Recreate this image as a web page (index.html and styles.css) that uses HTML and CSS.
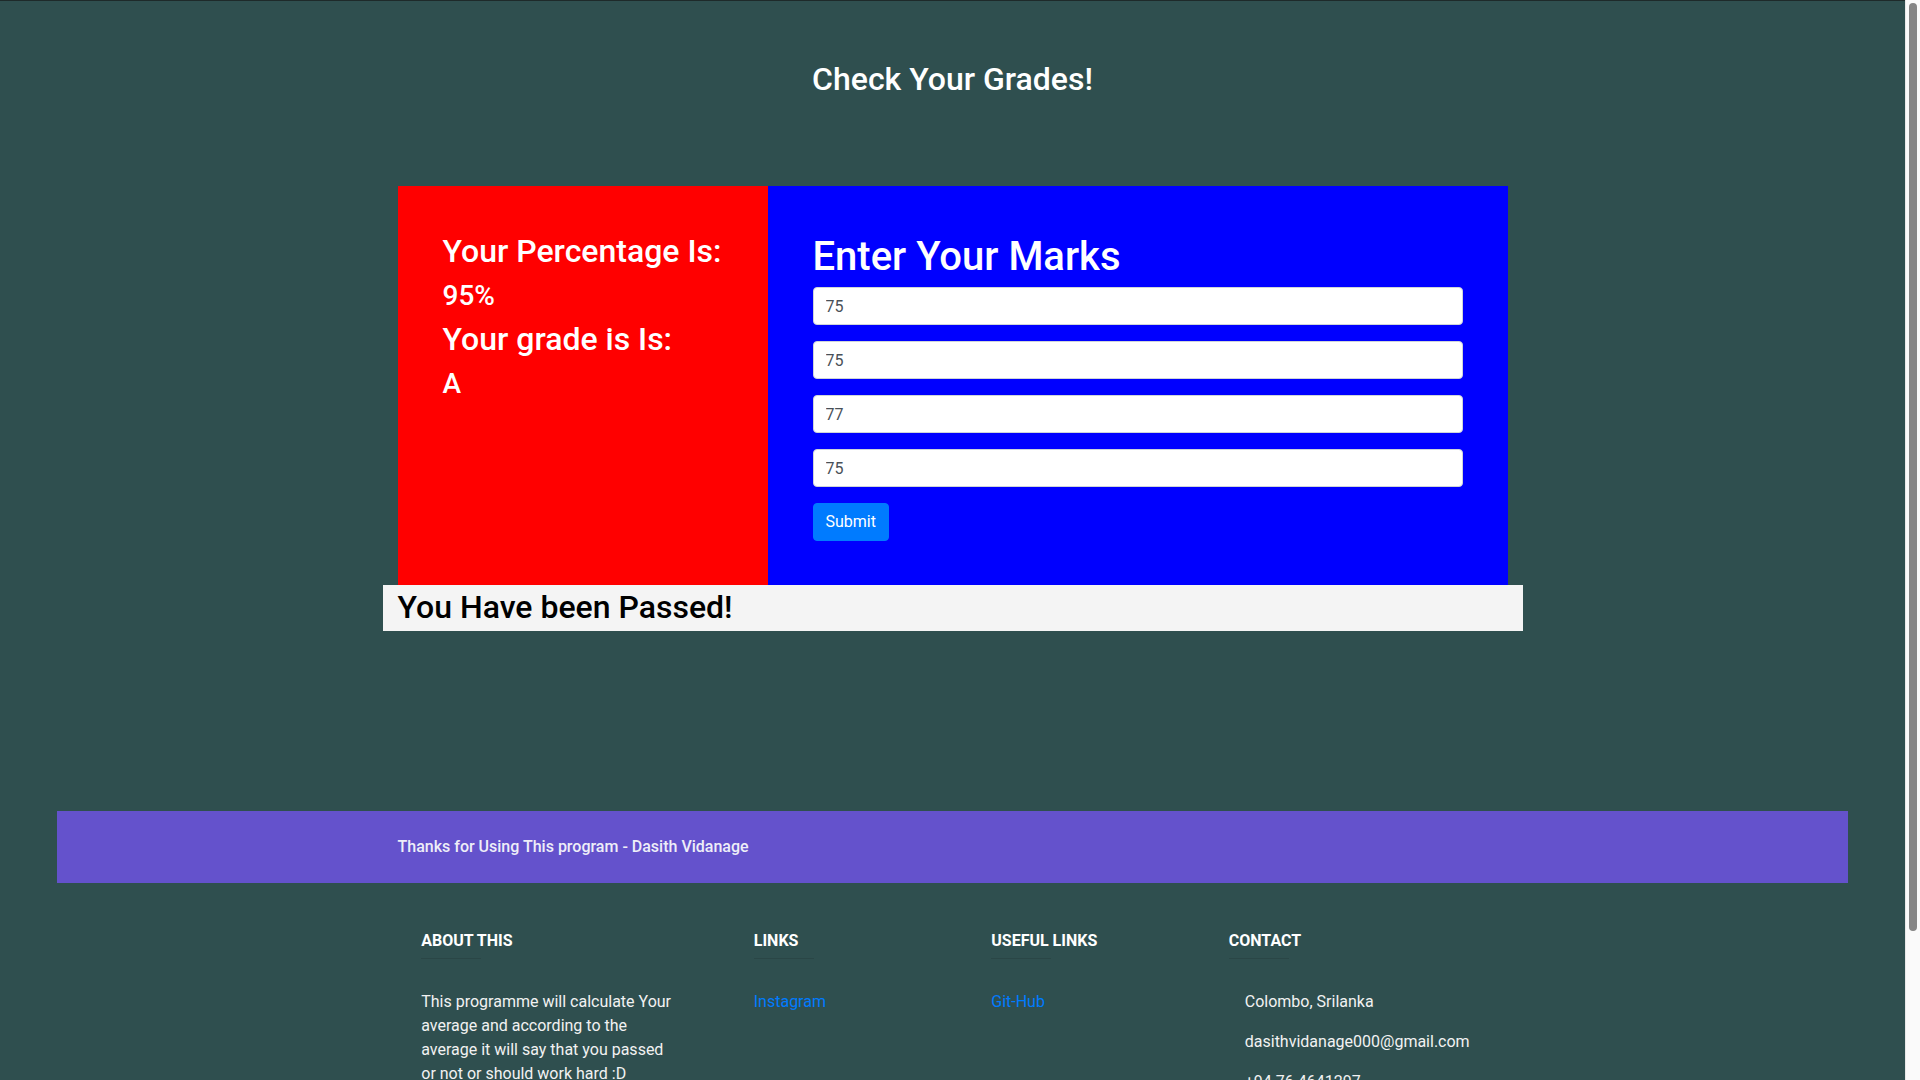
FILE: index.html
```html
<!DOCTYPE html>
<html lang="en">
<head>
<meta charset="utf-8">
<title>Check Your Grades!</title>
<link rel="stylesheet" href="styles.css">
</head>
<body>
<div class="page">
  <h2 class="page-title">Check Your Grades!</h2>

  <div class="grades">
    <div class="result-panel">
      <h2 class="label">Your Percentage Is:</h2>
      <h3 class="value">95%</h3>
      <h2 class="label">Your grade is Is:</h2>
      <h3 class="value">A</h3>
    </div>
    <div class="form-panel">
      <h1 class="form-title">Enter Your Marks</h1>
      <form class="marks-form">
        <input class="form-control" type="text" value="75">
        <input class="form-control" type="text" value="75">
        <input class="form-control" type="text" value="77">
        <input class="form-control" type="text" value="75">
        <button class="btn-submit" type="button">Submit</button>
      </form>
    </div>
  </div>

  <div class="pass-bar">You Have been Passed!</div>

  <footer class="site-footer">
    <div class="thanks-bar">
      <div class="thanks-inner">Thanks for Using This program - Dasith Vidanage</div>
    </div>

    <div class="footer-cols">
      <div class="fcol fcol-wide">
        <h6 class="fhead">About This</h6>
        <div class="fdivider"></div>
        <p class="ftext">This programme will calculate Your average and according to the average it will say that you passed or not or should work hard :D</p>
      </div>
      <div class="fcol fcol-narrow">
        <h6 class="fhead">Links</h6>
        <div class="fdivider"></div>
        <p class="ftext"><a class="flink" href="#">Instagram</a></p>
      </div>
      <div class="fcol fcol-narrow">
        <h6 class="fhead">Useful links</h6>
        <div class="fdivider"></div>
        <p class="ftext"><a class="flink" href="#">Git-Hub</a></p>
      </div>
      <div class="fcol fcol-wide">
        <h6 class="fhead">Contact</h6>
        <div class="fdivider"></div>
        <p class="ftext contact">Colombo, Srilanka</p>
        <p class="ftext contact">dasithvidanage000@gmail.com</p>
        <p class="ftext contact">+94 76 4641297</p>
      </div>
    </div>
  </footer>
</div>

<div class="scrollbar" aria-hidden="true"><div class="scroll-thumb"></div></div>
</body>
</html>
```

FILE: styles.css
```css
html, body {
  margin: 0;
  padding: 0;
}

body {
  background: #2f4f4f;
  font-family: Roboto, "Liberation Sans", Arial, sans-serif;
  font-size: 16px;
  line-height: 1.5;
  color: #fff;
}

.page {
  margin-right: 15px;
  border-top: 1px solid #1e2a2a;
}

.page-title {
  margin: 59px 0 0;
  text-align: center;
  font-size: 32px;
  line-height: 38.4px;
  font-weight: 500;
  color: #fff;
}

.grades {
  width: 1110px;
  margin: 87.6px auto 0;
  display: flex;
}

.result-panel {
  width: 370px;
  box-sizing: border-box;
  background: #ff0000;
  padding: 46px 45px 44px;
}

.label {
  margin: 0 0 8px;
  font-size: 32px;
  line-height: 38.4px;
  font-weight: 500;
}

.value {
  margin: 0 0 7px;
  padding-top: 1px;
  font-size: 28px;
  line-height: 33.6px;
  font-weight: 500;
}

.form-panel {
  width: 740px;
  box-sizing: border-box;
  background: #0000ff;
  padding: 45px 45px 44px;
}

.form-title {
  margin: 0 0 6px;
  padding-top: 2px;
  font-size: 40px;
  line-height: 48px;
  font-weight: 500;
}

.marks-form {
  display: flex;
  flex-direction: column;
  align-items: flex-start;
}

.form-control {
  display: block;
  width: 100%;
  height: 38px;
  box-sizing: border-box;
  margin: 0 0 16px;
  padding: 6px 12px;
  border: 1px solid #ced4da;
  border-radius: 4px;
  background: #fff;
  font-family: Roboto, "Liberation Sans", Arial, sans-serif;
  font-size: 16px;
  line-height: 24px;
  color: #495057;
}

.btn-submit {
  height: 38px;
  padding: 6px 12px;
  border: 1px solid #007bff;
  border-radius: 4px;
  background: #007bff;
  color: #fff;
  font-family: Roboto, "Liberation Sans", Arial, sans-serif;
  font-size: 16px;
  line-height: 24px;
}

.pass-bar {
  width: 1140px;
  box-sizing: border-box;
  margin: 0 auto;
  padding: 3px 15px 5px;
  background: #f4f4f4;
  color: #000;
  font-size: 32px;
  line-height: 38px;
  font-weight: 500;
}

.site-footer {
  margin-top: 180px;
  padding-bottom: 140px;
}

.thanks-bar {
  margin: 0 3%;
  background: #6452cc;
  padding: 24px 0;
}

.thanks-inner {
  width: 1110px;
  margin: 0 auto;
  font-weight: 500;
  color: #eeeef8;
  line-height: 24px;
}

.footer-cols {
  width: 1140px;
  margin: 48px auto 0;
  display: flex;
  justify-content: space-around;
}

.fcol {
  box-sizing: border-box;
  padding: 0 15px;
}

.fcol-wide {
  width: 285px;
}

.fcol-narrow {
  width: 190px;
}

.fhead {
  margin: 0 0 8px;
  font-size: 16px;
  line-height: 19.2px;
  font-weight: 700;
  text-transform: uppercase;
  color: #fff;
}

.fdivider {
  width: 60px;
  border-top: 1px solid rgba(0, 0, 0, 0.1);
  margin-bottom: 31px;
}

.ftext {
  margin: 0 0 16px;
  line-height: 24px;
  color: #f2f2f2;
}

.contact {
  padding-left: 16px;
}

.flink {
  color: #007bff;
  text-decoration: none;
}

/* painted browser scrollbar on the right edge of the viewport */
.scrollbar {
  position: fixed;
  top: 0;
  right: 0;
  width: 15px;
  height: 100vh;
  box-sizing: border-box;
  background: #fafafa;
  border-left: 1px solid #e8e8e8;
}

.scroll-thumb {
  margin: 3px 0 0 3px;
  width: 8px;
  height: 928px;
  border-radius: 4px;
  background: #858585;
}
```
